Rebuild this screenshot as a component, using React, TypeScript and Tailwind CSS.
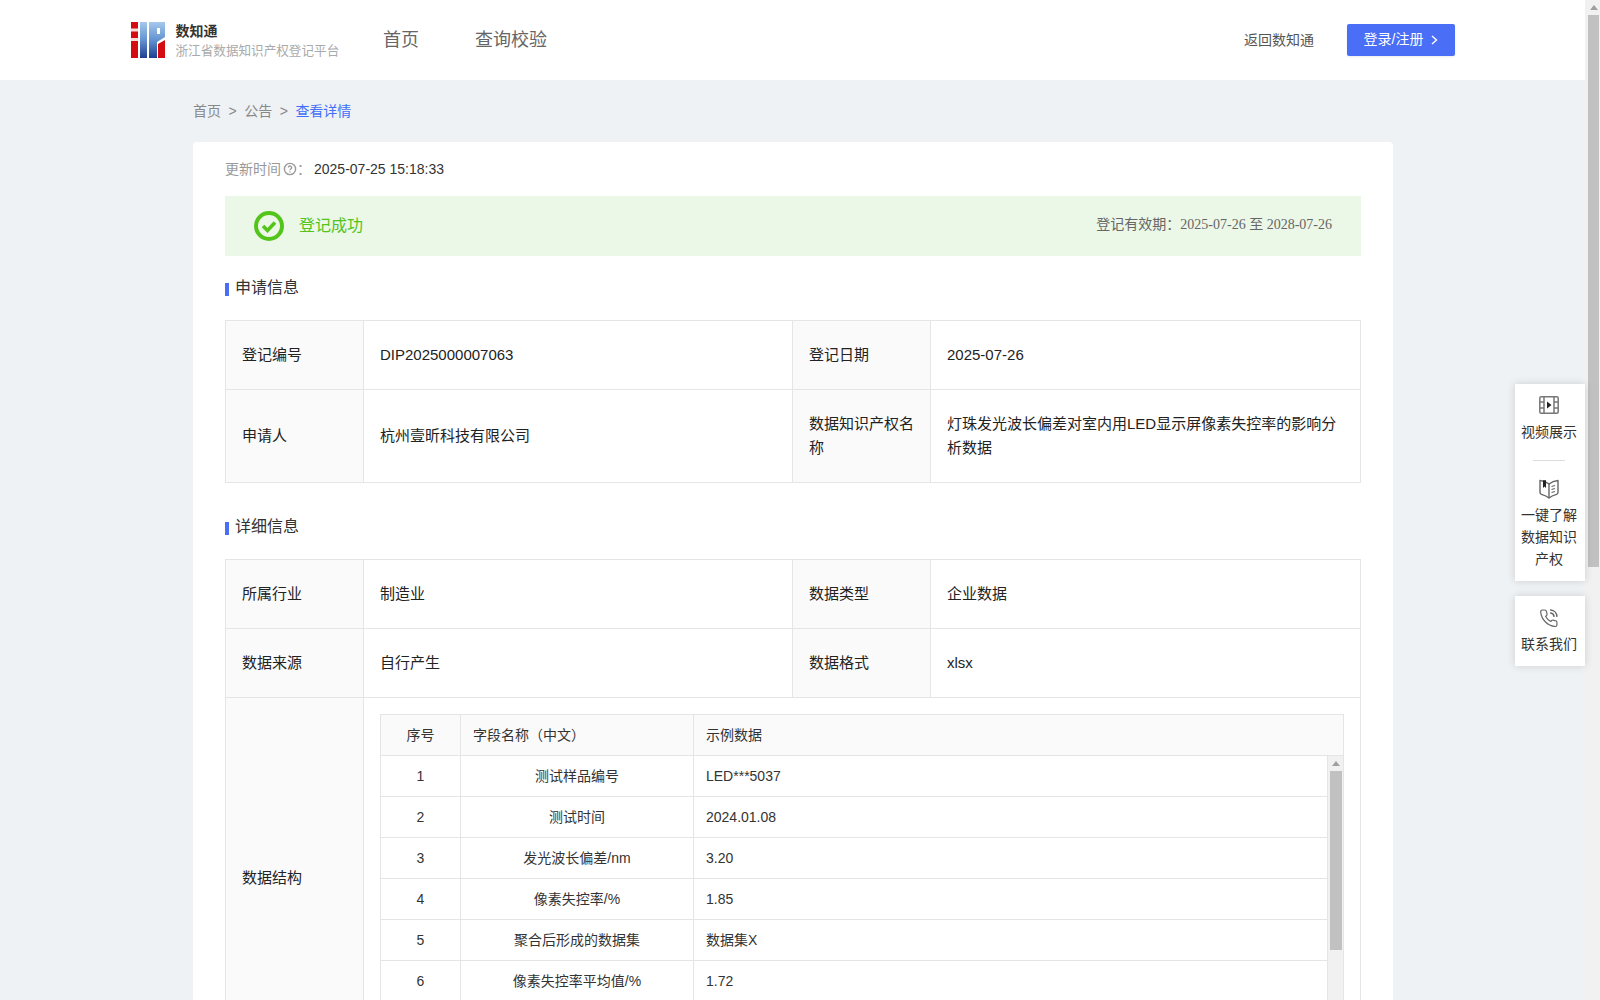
const font = { fontFamily: '"Liberation Sans", "Noto Sans CJK SC", sans-serif' };

const rows = [
  ['1', '测试样品编号', 'LED***5037'],
  ['2', '测试时间', '2024.01.08'],
  ['3', '发光波长偏差/nm', '3.20'],
  ['4', '像素失控率/%', '1.85'],
  ['5', '聚合后形成的数据集', '数据集X'],
  ['6', '像素失控率平均值/%', '1.72'],
];

function Logo() {
  return (
    <svg width="34" height="36" viewBox="0 0 34 36" className="shrink-0">
      <defs>
        <linearGradient id="logoBlue" x1="0" y1="0" x2="0" y2="1">
          <stop offset="0" stopColor="#a6c8ec" />
          <stop offset="0.5" stopColor="#6393d0" />
          <stop offset="1" stopColor="#1f3f8f" />
        </linearGradient>
      </defs>
      <rect x="0" y="0" width="7" height="36" fill="#d40c12" />
      <rect x="0" y="6.5" width="7" height="3" fill="#f4dcdc" />
      <rect x="0" y="16" width="7" height="3" fill="#f4dcdc" />
      <rect x="9" y="0" width="7" height="36" fill="url(#logoBlue)" />
      <path d="M18 0H34V15L26 20V36H18Z" fill="url(#logoBlue)" />
      <rect x="26" y="6" width="3" height="6" fill="#fff" />
      <path d="M27 22L34 18V36H27Z" fill="#d40c12" />
    </svg>
  );
}

function VideoIcon() {
  return (
    <svg width="20" height="18" viewBox="0 0 20 18" fill="none" stroke="#777" strokeWidth="1.5">
      <rect x="0.8" y="0.8" width="18.4" height="16.4" rx="1.5" />
      <path d="M5 0.8V17.2M15 0.8V17.2M0.8 6H5M0.8 12H5M15 6H19.2M15 12H19.2" />
      <path d="M8 5.5L12.5 9L8 12.5Z" fill="#222" stroke="none" />
    </svg>
  );
}

function BookIcon() {
  return (
    <svg width="20" height="20" viewBox="0 0 20 20" fill="none" stroke="#666" strokeWidth="1.4">
      <path d="M10 5C8 3.4 4.5 1.8 1 1.5V13.5C1 14.5 1.5 15 2.5 15.3C5 16 8 17.2 10 19C12 17.2 15 16 17.5 15.3C18.5 15 19 14.5 19 13.5V1.5C15.5 1.8 12 3.4 10 5Z" strokeLinejoin="round" />
      <path d="M10 5V19" />
      <path d="M4 1.2H7V9L5.5 7.6L4 9Z" fill="#222" stroke="none" />
      <path d="M12.5 7.5L16 6.5M12.5 10.5L16 9.5M12.5 13.5L16 12.5" strokeWidth="1.2" />
    </svg>
  );
}

function PhoneIcon() {
  return (
    <svg width="20" height="20" viewBox="0 0 24 24" fill="none" stroke="#666" strokeWidth="1.4" strokeLinecap="round" strokeLinejoin="round">
      <path d="M14 2.5a8 8 0 0 1 7.5 7.5" strokeWidth="1.8" />
      <path d="M14 6a4.5 4.5 0 0 1 4 4" strokeWidth="1.8" />
      <path d="M21.5 17.4v2.8a2 2 0 0 1-2.2 2A19.5 19.5 0 0 1 2 4.6a2 2 0 0 1 2-2.2h2.9a2 2 0 0 1 2 1.7c.1 1 .4 1.9.7 2.8a2 2 0 0 1-.5 2.1L8 10.2a16 16 0 0 0 6 6l1.2-1.2a2 2 0 0 1 2.1-.4c.9.3 1.8.6 2.8.7a2 2 0 0 1 1.4 2.1Z" />
    </svg>
  );
}

function Arrow() {
  return <div className="w-0 h-0 border-x-[4px] border-x-transparent border-b-[5px] border-b-[#a0a0a0]" />;
}

function SectionTitle({ title, className }: { title: string; className: string }) {
  return (
    <div className={`flex items-center gap-[6px] text-[16px] leading-[24px] text-[#333] ${className}`}>
      <span className="w-[4px] h-[13px] mt-[3px] bg-[#4a6ef5]" />
      {title}
    </div>
  );
}

function Label({ children }: { children: React.ReactNode }) {
  return <td className="border border-[#e5e5e5] bg-[#fafafa] px-4 py-[22px] align-middle">{children}</td>;
}

function Value({ children }: { children: React.ReactNode }) {
  return <td className="border border-[#e5e5e5] px-4 py-[22px] align-middle">{children}</td>;
}

function Colgroup() {
  return (
    <colgroup>
      <col className="w-[138px]" />
      <col className="w-[429px]" />
      <col className="w-[138px]" />
      <col className="w-[430px]" />
    </colgroup>
  );
}

function FieldTable() {
  return (
    <div className="w-[964px] border border-[#e5e5e5] text-[14px] leading-[20px] text-[#333]">
      <div className="flex h-[41px] items-center bg-[#fafafa] border-b border-[#e5e5e5]">
        <div className="w-[79px] text-center">序号</div>
        <div className="w-[234px] h-full flex items-center px-3 border-x border-[#e5e5e5]">字段名称（中文）</div>
        <div className="px-3">示例数据</div>
      </div>
      <div className="flex h-[285px] overflow-hidden">
        <div className="flex-1">
          {rows.map((r) => (
            <div key={r[0]} className="flex h-[41px] items-center border-b border-[#e5e5e5]">
              <div className="w-[79px] text-center">{r[0]}</div>
              <div className="w-[234px] h-full flex items-center justify-center px-3 border-x border-[#e5e5e5]">{r[1]}</div>
              <div className="px-3">{r[2]}</div>
            </div>
          ))}
        </div>
        <div className="w-[16px] border-l border-[#e5e5e5] bg-[#f1f1f1] flex flex-col items-center pt-[5px]">
          <Arrow />
          <div className="mt-[5px] w-[12px] h-[179px] bg-[#c1c1c1]" />
        </div>
      </div>
    </div>
  );
}

function SideWidget() {
  return (
    <div className="absolute right-[15px] top-[384px] w-[70px] flex flex-col gap-[15px] text-[14px] text-[#333] text-center">
      <div className="bg-white shadow-[0_0_8px_rgba(0,0,0,0.15)] h-[197px] flex flex-col items-center pt-[12px] pr-[2px]">
        <VideoIcon />
        <div className="mt-[8px] leading-[20px]">视频展示</div>
        <div className="mt-[18px] w-[32px] h-px bg-[#ddd]" />
        <div className="mt-[18px]"><BookIcon /></div>
        <div className="mt-[5px] leading-[22px] w-[56px]">一键了解数据知识产权</div>
      </div>
      <div className="bg-white shadow-[0_0_8px_rgba(0,0,0,0.15)] h-[70px] flex flex-col items-center pt-[12px] pr-[2px]">
        <PhoneIcon />
        <div className="mt-[6px] leading-[20px]">联系我们</div>
      </div>
    </div>
  );
}

export default function App() {
  return (
    <div className="h-screen flex overflow-hidden bg-[#eff2f5] relative" style={font}>
      <div className="flex-1 min-w-0 overflow-hidden">
        <header className="h-[80px] bg-white flex items-center pl-[131px] pr-[130px]">
          <Logo />
          <div className="ml-[10.5px] w-[207.5px]">
            <div className="text-[14px] leading-[20px] font-bold text-[#333]">数知通</div>
            <div className="mt-[1px] text-[12.6px] leading-[18px] text-[#aaa]">浙江省数据知识产权登记平台</div>
          </div>
          <nav className="flex gap-[56px] text-[18px] text-[#666]">
            <span>首页</span>
            <span>查询校验</span>
          </nav>
          <div className="ml-auto flex items-center gap-[33px] text-[14px]">
            <span className="text-[#555]">返回数知通</span>
            <button className="w-[108px] h-[32px] rounded-[2px] bg-[#4a6ef5] text-white flex items-center justify-center gap-[8px] shadow-[0_1px_2px_rgba(0,0,0,0.08)]">
              <span className="-mt-[2px]">登录/注册</span>
              <svg width="7" height="10" viewBox="0 0 7 10" fill="none" stroke="#fff" strokeWidth="1.4"><path d="M1 1L5.5 5L1 9" /></svg>
            </button>
          </div>
        </header>

        <div className="ml-[193px] w-[1200px]">
          <div className="h-[62px] flex items-center gap-[7.5px] text-[14px] text-[#888]">
            <span>首页</span>
            <span>&gt;</span>
            <span>公告</span>
            <span>&gt;</span>
            <span className="text-[#3f6ff5]">查看详情</span>
          </div>

          <div className="bg-white rounded-[4px] px-8 pt-[17px]">
            <div className="h-[20px] flex items-center text-[14px]">
              <span className="text-[#999]">更新时间</span>
              <svg width="14" height="14" viewBox="0 0 14 14" fill="none" className="ml-[2px]" stroke="#999" strokeWidth="1.4">
                <circle cx="7" cy="7" r="5.6" />
                <path d="M5.4 5.6a1.6 1.6 0 1 1 2.4 1.4c-.5.3-.8.6-.8 1.2M7 9.4v1" />
              </svg>
              <span className="text-[#999] w-[17px]">：</span>
              <span className="text-[#333]">2025-07-25 15:18:33</span>
            </div>

            <div className="mt-[17px] h-[60px] bg-[#ebf7e7] flex items-center pl-[29px] pr-[29px]">
              <svg width="30" height="30" viewBox="0 0 30 30" fill="none" stroke="#52c41a">
                <circle cx="15" cy="15" r="13" strokeWidth="4" />
                <path d="M9 15L13.5 19.5L21 11.5" strokeWidth="3.5" />
              </svg>
              <span className="ml-[15px] text-[16px] text-[#52c41a] -mt-[1px]">登记成功</span>
              <span className="ml-auto text-[14px] text-[#666] -mt-[3px]">
                登记有效期：<span className="font-['Liberation_Serif','Noto_Sans_CJK_SC',serif]">2025-07-26 至 2028-07-26</span>
              </span>
            </div>

            <SectionTitle title="申请信息" className="mt-[20px]" />
            <table className="mt-[20px] w-[1135px] table-fixed border-collapse text-[15px] leading-[24px] text-[#222]">
              <Colgroup />
              <tbody>
                <tr>
                  <Label>登记编号</Label>
                  <Value>DIP2025000007063</Value>
                  <Label>登记日期</Label>
                  <Value>2025-07-26</Value>
                </tr>
                <tr>
                  <Label>申请人</Label>
                  <Value>杭州壹昕科技有限公司</Value>
                  <Label>数据知识产权名称</Label>
                  <Value>灯珠发光波长偏差对室内用LED显示屏像素失控率的影响分析数据</Value>
                </tr>
              </tbody>
            </table>

            <SectionTitle title="详细信息" className="mt-[32px]" />
            <table className="mt-[20px] w-[1135px] table-fixed border-collapse text-[15px] leading-[24px] text-[#222]">
              <Colgroup />
              <tbody>
                <tr>
                  <Label>所属行业</Label>
                  <Value>制造业</Value>
                  <Label>数据类型</Label>
                  <Value>企业数据</Value>
                </tr>
                <tr>
                  <Label>数据来源</Label>
                  <Value>自行产生</Value>
                  <Label>数据格式</Label>
                  <Value>xlsx</Value>
                </tr>
                <tr>
                  <Label>数据结构</Label>
                  <td colSpan={3} className="border border-[#e5e5e5] p-4">
                    <FieldTable />
                  </td>
                </tr>
              </tbody>
            </table>
          </div>
        </div>
      </div>

      <div className="w-[15px] bg-[#f1f1f1] flex flex-col items-center pt-[5px] pl-[2px]">
        <Arrow />
        <div className="mt-[5px] w-[11px] h-[552px] bg-[#c1c1c1]" />
      </div>
      <SideWidget />
    </div>
  );
}
